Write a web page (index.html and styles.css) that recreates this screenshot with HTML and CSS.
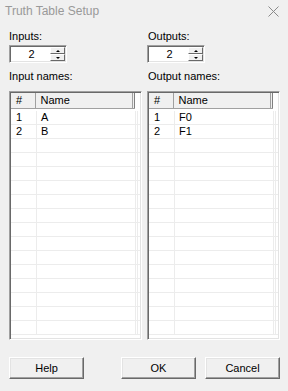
FILE: index.html
```html
<!DOCTYPE html>
<html lang="en">
<head>
    <meta charset="UTF-8">
    <title>Truth Table Setup</title>
    <link rel="stylesheet" href="styles.css">
</head>
<body>
<div class="dialog">
    <!-- Barra de título -->
    <div class="titlebar">
        <span class="title">Truth Table Setup</span>
        <svg class="close" width="11" height="11" viewBox="0 0 11 11">
            <path d="M0.5 0.5 L10.5 10.5 M10.5 0.5 L0.5 10.5" stroke="#8a8a8a" stroke-width="1" fill="none"/>
        </svg>
    </div>

    <div class="content">
        <div class="columns">
            <!-- Entradas -->
            <div class="column">
                <div class="label">Inputs:</div>
                <div class="spinner">
                    <div class="spin-value">2</div>
                    <div class="spin-buttons">
                        <div class="spin-btn"><span class="arrow up"></span></div>
                        <div class="spin-btn"><span class="arrow down"></span></div>
                    </div>
                </div>
                <div class="label names-label">Input names:</div>
                <div class="grid">
                    <div class="grid-head">
                        <div class="cell num">#</div>
                        <div class="cell name">Name</div>
                        <div class="cell rest"></div>
                    </div>
                    <div class="grid-body" id="inputs-body"></div>
                </div>
            </div>

            <!-- Saídas -->
            <div class="column">
                <div class="label">Outputs:</div>
                <div class="spinner">
                    <div class="spin-value">2</div>
                    <div class="spin-buttons">
                        <div class="spin-btn"><span class="arrow up"></span></div>
                        <div class="spin-btn"><span class="arrow down"></span></div>
                    </div>
                </div>
                <div class="label names-label">Output names:</div>
                <div class="grid">
                    <div class="grid-head">
                        <div class="cell num">#</div>
                        <div class="cell name">Name</div>
                        <div class="cell rest"></div>
                    </div>
                    <div class="grid-body" id="outputs-body"></div>
                </div>
            </div>
        </div>

        <!-- Botões -->
        <div class="buttons">
            <button class="btn">Help</button>
            <div class="right-buttons">
                <button class="btn">OK</button>
                <button class="btn">Cancel</button>
            </div>
        </div>
    </div>
</div>

<script>
    // Preenche as tabelas com as linhas
    function fillGrid(id, names) {
        var body = document.getElementById(id);
        for (var i = 0; i < 16; i++) {
            var row = document.createElement('div');
            row.className = 'row';
            row.innerHTML =
                '<div class="cell num">' + (i < names.length ? i + 1 : '') + '</div>' +
                '<div class="cell name">' + (names[i] || '') + '</div>' +
                '<div class="cell rest"></div>';
            body.appendChild(row);
        }
    }
    fillGrid('inputs-body', ['A', 'B']);
    fillGrid('outputs-body', ['F0', 'F1']);
</script>
</body>
</html>
```

FILE: styles.css
```css
* {
    margin: 0;
    padding: 0;
    box-sizing: border-box;
}
body, html {
    width: 288px;
    height: 391px;
    background-color: #f0f0f0;
    font-family: "Liberation Sans", Arial, sans-serif;
    font-size: 11px;
    color: #000;
    overflow: hidden;
}
.dialog {
    width: 288px;
    height: 391px;
    display: flex;
    flex-direction: column;
}

/* Barra de título */
.titlebar {
    height: 22px;
    display: flex;
    align-items: center;
    justify-content: space-between;
    padding: 0 9px 0 5px;
}
.title {
    font-size: 12px;
    color: #999;
}
.close {
    display: block;
}

.content {
    flex: 1;
    display: flex;
    flex-direction: column;
    padding: 0 8px 12px 9px;
}
.columns {
    display: flex;
    gap: 5px;
}
.column {
    width: 133px;
    display: flex;
    flex-direction: column;
}
.label {
    height: 13px;
    line-height: 13px;
    margin-top: 8px;
}
.column + .column .label {
    padding-left: 1px;
}
.names-label {
    margin-top: 7px;
}

/* Caixa numérica */
.spinner {
    width: 58px;
    height: 18px;
    margin-top: 2px;
    display: flex;
    background: #fff;
    border-top: 1px solid #a0a0a0;
    border-left: 1px solid #a0a0a0;
    border-right: 1px solid #fff;
    border-bottom: 1px solid #fff;
    box-shadow: inset 1px 1px 0 #696969, inset -1px -1px 0 #e3e3e3;
    padding: 1px 1px 1px 1px;
}
.spin-value {
    flex: 1;
    text-align: center;
    line-height: 14px;
    padding-left: 2px;
}
.spin-buttons {
    width: 15px;
    display: flex;
    flex-direction: column;
}
.spin-btn {
    flex: 1;
    background: #f0f0f0;
    border-top: 1px solid #fff;
    border-left: 1px solid #fff;
    border-right: 1px solid #696969;
    border-bottom: 1px solid #696969;
    display: flex;
    align-items: center;
    justify-content: center;
}
.arrow {
    width: 0;
    height: 0;
    border-left: 2px solid transparent;
    border-right: 2px solid transparent;
}
.arrow.up {
    border-bottom: 2px solid #000;
}
.arrow.down {
    border-top: 2px solid #000;
}

/* Tabelas */
.grid {
    height: 249px;
    margin-top: 8px;
    display: flex;
    flex-direction: column;
    background: #fff;
    border-top: 1px solid #a0a0a0;
    border-left: 1px solid #a0a0a0;
    border-right: 1px solid #fff;
    border-bottom: 1px solid #fff;
    box-shadow: inset 1px 1px 0 #696969, inset -1px -1px 0 #e3e3e3;
    padding: 1px 1px 1px 1px;
    overflow: hidden;
}
.grid-head {
    height: 16px;
    display: flex;
    flex-shrink: 0;
    background: #f0f0f0;
    border-bottom: 1px solid #a0a0a0;
    margin-right: 5px;
}
.grid-head .cell {
    border-right: 1px solid #a0a0a0;
    line-height: 15px;
}
.grid-head .rest {
    border-right: 1px solid #808080;
}
.grid-body {
    flex: 1;
    overflow: hidden;
    padding-top: 2px;
}
.row {
    height: 14px;
    display: flex;
    border-bottom: 1px solid #ececec;
}
.cell {
    border-right: 1px solid #ececec;
    line-height: 13px;
    white-space: nowrap;
}
.num {
    width: 26px;
    padding-left: 5px;
}
.name {
    width: 99px;
    padding-left: 4px;
}
.rest {
    width: 2px;
}

/* Botões de baixo */
.buttons {
    margin-top: auto;
    display: flex;
    justify-content: space-between;
}
.right-buttons {
    display: flex;
    gap: 9px;
}
.btn {
    width: 75px;
    height: 22px;
    font-family: "Liberation Sans", Arial, sans-serif;
    font-size: 11px;
    color: #000;
    background: #f0f0f0;
    border-top: 1px solid #fff;
    border-left: 1px solid #fff;
    border-right: 1px solid #696969;
    border-bottom: 1px solid #696969;
    box-shadow: inset -1px -1px 0 #a0a0a0, inset 1px 1px 0 #e3e3e3;
}
```
